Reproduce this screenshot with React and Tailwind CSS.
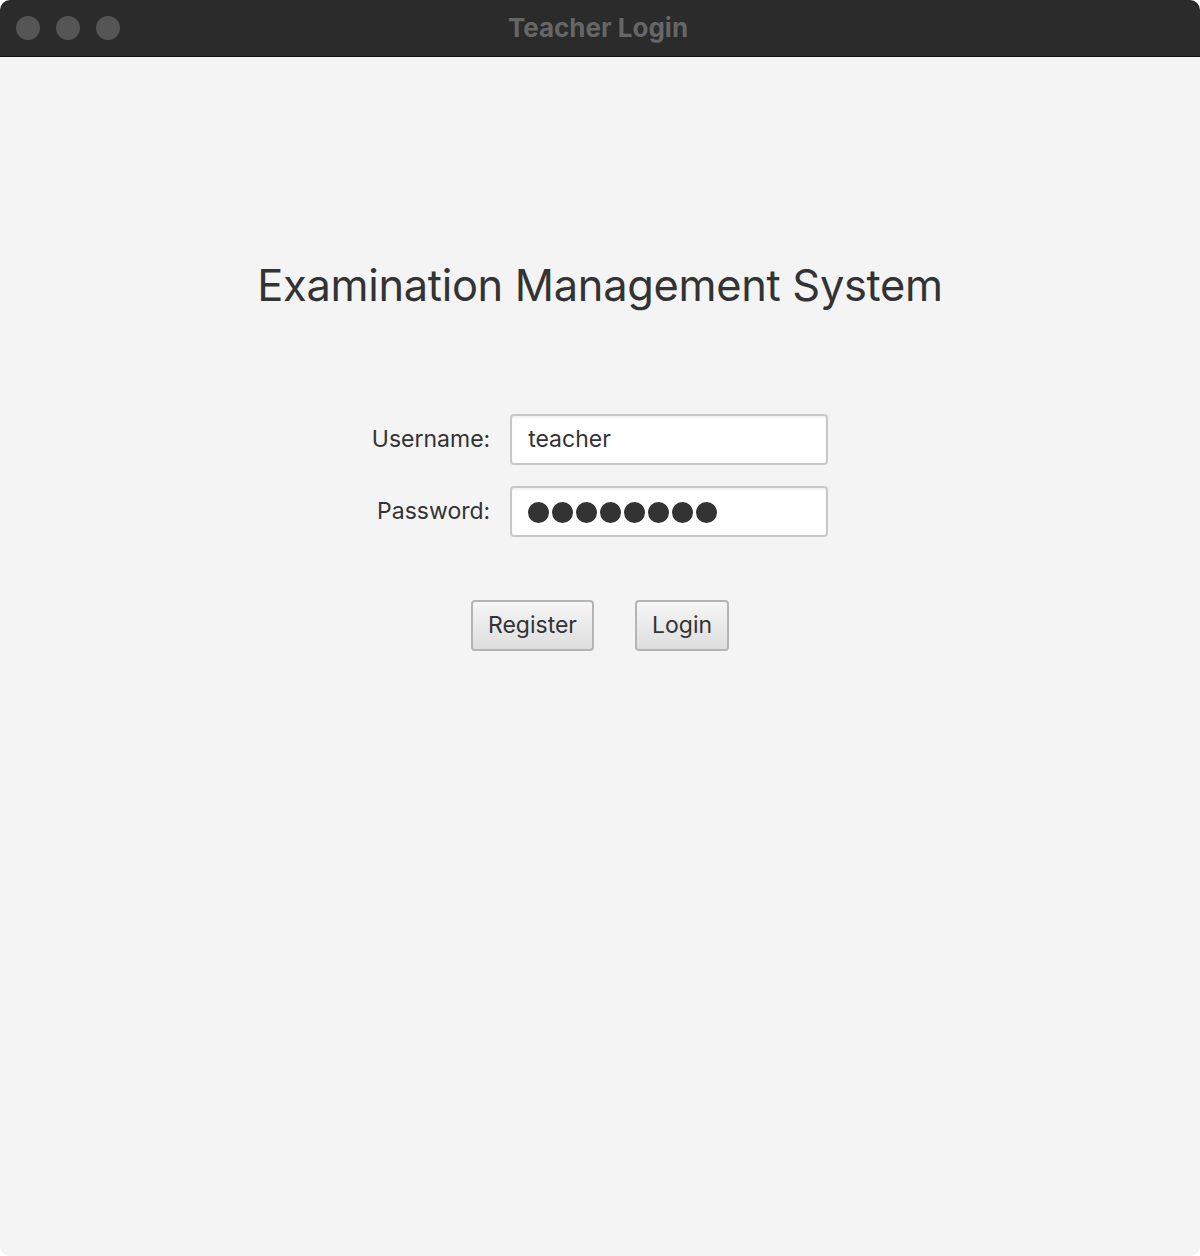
export default function App() {
	return (
		<div className="w-[1200px] h-[1256px] bg-white font-['Inter',sans-serif]">
			<div className="w-full h-full rounded-[10px] overflow-hidden flex flex-col bg-[#f4f4f4]">
				{/* Title bar */}
				<div className="h-[57px] bg-[#2b2b2b] border-b border-[#111] flex items-center relative shrink-0">
					<div className="flex gap-4 pl-4">
						<span className="w-6 h-6 rounded-full bg-[#555]" />
						<span className="w-6 h-6 rounded-full bg-[#555]" />
						<span className="w-6 h-6 rounded-full bg-[#555]" />
					</div>
					<div className="absolute inset-0 flex items-center justify-center text-[26px] font-bold text-[#666] -translate-x-[2px] -translate-y-[1px]">
						Teacher Login
					</div>
				</div>

				{/* Content */}
				<div className="flex-1 flex flex-col items-center">
					<h1 className="mt-[200px] text-[43.4px] leading-[56px] text-[#333] tracking-[-0.3px]">
						Examination Management System
					</h1>

					<div className="mt-[101px] grid grid-cols-[auto_318px] gap-x-5 gap-y-[21px] items-center">
						<label className="text-[23px] text-[#333] text-right">Username:</label>
						<div className="h-[51px] bg-white border-2 border-[#c8c8c8] rounded-[4px] flex items-center px-4 text-[23px] text-[#333] shadow-[inset_0_2px_2px_rgba(0,0,0,0.06)]">
							teacher
						</div>
						<label className="text-[23px] text-[#333] text-right">Password:</label>
						<div className="h-[51px] bg-white border-2 border-[#c8c8c8] rounded-[4px] flex items-center px-4 gap-[3px] pt-[2px] shadow-[inset_0_2px_2px_rgba(0,0,0,0.06)]">
							{[0, 1, 2, 3, 4, 5, 6, 7].map((i) => (
								<span key={i} className="w-[21px] h-[21px] rounded-full bg-[#333]" />
							))}
						</div>
					</div>

					<div className="mt-[63px] flex gap-[41px]">
						<button className="h-[51px] px-[15px] border-2 border-[#b4b4b4] rounded-[4px] bg-gradient-to-b from-[#f6f6f6] to-[#dedede] text-[23px] text-[#333]">
							Register
						</button>
						<button className="h-[51px] px-[15px] border-2 border-[#b4b4b4] rounded-[4px] bg-gradient-to-b from-[#f6f6f6] to-[#dedede] text-[23px] text-[#333]">
							Login
						</button>
					</div>
				</div>
			</div>
		</div>
	);
}
